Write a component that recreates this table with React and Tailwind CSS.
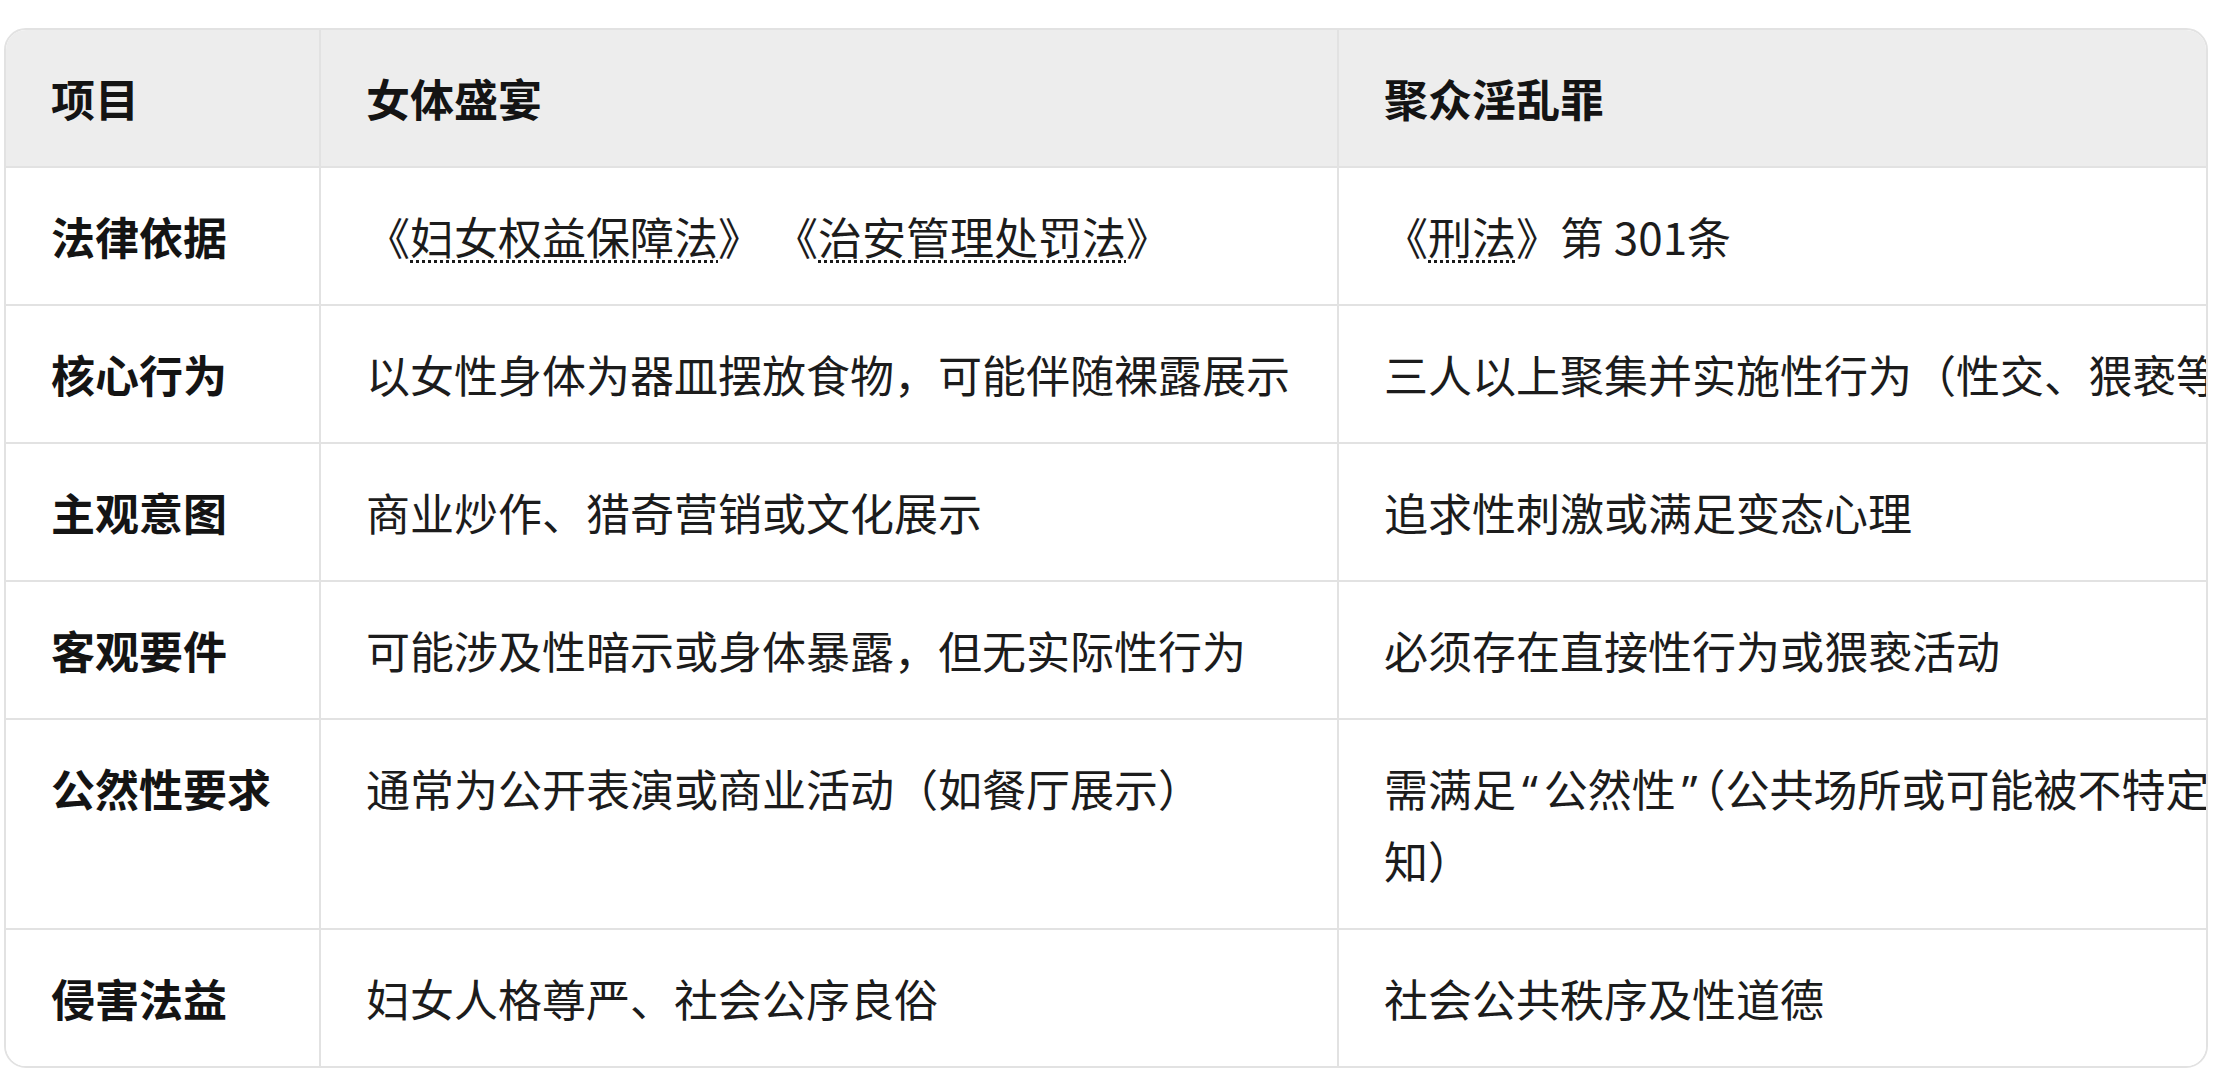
import React from "react";

const link =
  "underline decoration-dotted decoration-[3px] underline-offset-[5px] decoration-[#1a1a1a]";
const quote = "px-[6px]";
const latin = { fontFamily: '"Noto Sans", "Liberation Sans", sans-serif' };

const rows = [
  {
    label: "法律依据",
    a: (
      <>
        《<span className={link}>妇女权益保障法</span>》<span className="inline-block w-[12px]" />《<span className={link}>治安管理处罚法</span>》
      </>
    ),
    b: (
      <>
        《<span className={link}>刑法</span>》第 301条
      </>
    ),
  },
  {
    label: "核心行为",
    a: "以女性身体为器皿摆放食物，可能伴随裸露展示",
    b: "三人以上聚集并实施性行为（性交、猥亵等）",
  },
  {
    label: "主观意图",
    a: "商业炒作、猎奇营销或文化展示",
    b: "追求性刺激或满足变态心理",
  },
  {
    label: "客观要件",
    a: "可能涉及性暗示或身体暴露，但无实际性行为",
    b: "必须存在直接性行为或猥亵活动",
  },
  {
    label: "公然性要求",
    a: "通常为公开表演或商业活动（如餐厅展示）",
    b: (
      <>
        需满足<span className={quote} style={latin}>“</span>公然性<span className={quote} style={latin}>”</span>（公共场所或可能被不特定多数人感
        <br />
        知）
      </>
    ),
  },
  {
    label: "侵害法益",
    a: "妇女人格尊严、社会公序良俗",
    b: "社会公共秩序及性道德",
  },
];

function Cell({ children, head, bold, last, right }) {
  return (
    <div
      className={`px-[45px] py-[33px] leading-[70px] whitespace-nowrap border-[#e2e2e2] ${
        last ? "" : "border-b-2"
      } ${right ? "" : "border-r-2"} ${head ? "bg-[#ededed]" : "bg-white"} ${
        bold ? "font-semibold text-[#141414]" : "text-[#1c1c1c]"
      }`}
    >
      {children}
    </div>
  );
}

export default function App() {
  return (
    <div
      className="min-h-screen bg-white pt-[28px] pl-[4px]"
      style={{ fontFamily: '"Noto Sans CJK SC", "Noto Sans", sans-serif' }}
    >
      <div className="w-[2204px] rounded-[22px] border-2 border-[#e2e2e2] overflow-hidden text-[44px]">
        <div className="grid grid-cols-[315px_1018px_1120px]">
          <Cell head bold>项目</Cell>
          <Cell head bold>女体盛宴</Cell>
          <Cell head bold right>聚众淫乱罪</Cell>
          {rows.map((r, i) => {
            const last = i === rows.length - 1;
            return (
              <React.Fragment key={r.label}>
                <Cell bold last={last}>{r.label}</Cell>
                <Cell last={last}>{r.a}</Cell>
                <Cell last={last} right>{r.b}</Cell>
              </React.Fragment>
            );
          })}
        </div>
      </div>
    </div>
  );
}
